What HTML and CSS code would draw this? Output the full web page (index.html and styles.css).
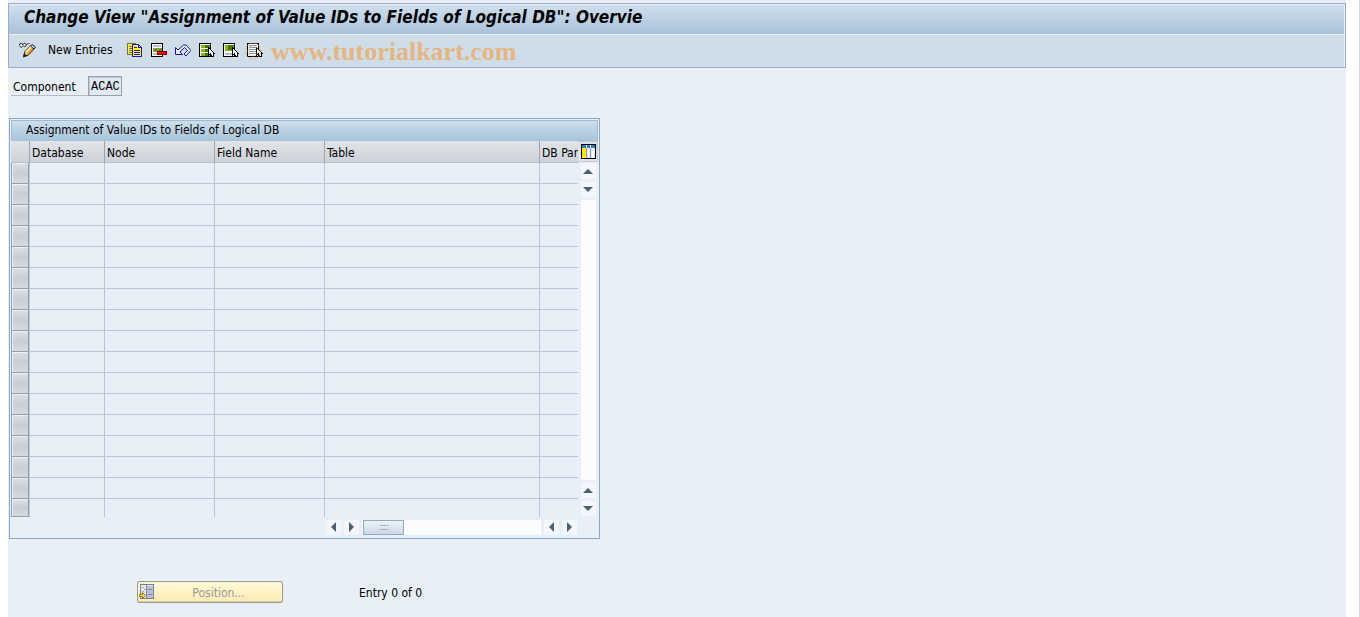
FILE: index.html
```html
<!DOCTYPE html>
<html lang="en">
  <head>
    <meta charset="utf-8" />
    <meta name="viewport" content="width=device-width, initial-scale=1" />
    <title>Change View: Overview</title>
    <link rel="stylesheet" href="styles.css">
    <script src="rows.js" defer></script>
  </head>
  <body>
    <main class="screen">
      <header class="head">
        <h1>Change View "Assignment of Value IDs to Fields of Logical DB": Overvie</h1>
        <div class="toolbar">
          <button type="button" class="tool" aria-label="Display / Change">
            <svg width="17" height="16" viewBox="0 0 17 16">
              <path d="M0.500 3.500v-1.500l1.500-1 1.500 1v1l2-2 1.500 1v1.500l2.500-2.500 1 1M0.500 4l2 1.500 1-1.500M4 3.500l1.500 1.500 1.500-1" fill="none" stroke="#333" />
              <path d="M1.500 3.500h1.500M5 3h1.500" stroke="#fff" />
              <path d="M4.500 14.500l1.500-5 6.500-6.500 3.500 3-6.500 7z" fill="#f9c24d" stroke="#222" />
              <path d="M7 10l5.500-5.500" stroke="#fff6c8" stroke-width="1.500" />
              <path d="M9 12l6-6.500" stroke="#e0812e" stroke-width="1.500" />
              <path d="M11.500 4l1.500-1.500 3.500 2.500-1.500 2z" fill="#d5dcee" stroke="#222" />
              <path d="M4 15.500l1-4 3.500 2.500z" fill="#222" />
            </svg>
          </button>
          <button type="button" class="tool text">New Entries</button>
          <button type="button" class="tool" aria-label="Copy As">
            <svg width="16" height="16" viewBox="0 0 16 16" shape-rendering="crispEdges">
              <path d="M0.500 1.500h8v11h-8z" fill="#f7ee5a" stroke="#77713a" />
              <path d="M2 4h3M2 6h3M2 8h3M2 10h3" stroke="#77713a" />
              <path d="M5.500 2.500h6l3 3v9h-9z" fill="#ffff21" stroke="#1414c8" />
              <path d="M11.500 2.500v3h3M7 5.500h3M7 8.500h6M7 10.500h6M7 12.500h6" fill="none" stroke="#1414c8" />
              <path d="M7 7.500h6M7 9.500h6M7 11.500h6M7 13.500h6" stroke="#ffff21" />
            </svg>
          </button>
          <button type="button" class="tool" aria-label="Delete">
            <svg width="16" height="16" viewBox="0 0 16 16" shape-rendering="crispEdges">
              <path d="M0.500 1.500h11v13h-11z" fill="#fff" stroke="#000" />
              <path d="M2 3h8v2H2zM2 11h5v2H2z" fill="#b9bfd9" />
              <path d="M2 6h9v4H2z" fill="#83a526" />
              <path d="M4 7h2v2H4zM8 7h2v2H8z" fill="#567c00" />
              <path d="M6.500 9.500h9v3h-9z" fill="#f00" stroke="#7a0000" />
            </svg>
          </button>
          <button type="button" class="tool" aria-label="Undo">
            <svg width="16" height="16" viewBox="0 0 16 16">
              <path d="M0.500 5.500v7h7l-2.500-2.500 4.500-4.500 3 3-3.500 3.500 2 2 5-5.500-5-5.500h-2.500l-5.500 5z" fill="#e6edf6" stroke="#15159c" />
            </svg>
          </button>
          <button type="button" class="tool" aria-label="Select All">
            <svg width="16" height="16" viewBox="0 0 16 16" shape-rendering="crispEdges">
              <path d="M0.500 1.500h11v13h-11z" fill="#fff" stroke="#000" />
              <path d="M2 3h9v3H2zM2 7h9v3H2zM2 11h9v3H2z" fill="#83b51c" />
              <path d="M6 3h5v3H6zM6 7h5v3H6zM6 11h4v3H6z" fill="#4b7600" />
              <path d="M9.500 5.500v8l2-2 1 3h1.500v-3h1.500z" fill="#fff" stroke="#000" />
            </svg>
          </button>
          <button type="button" class="tool" aria-label="Select Block">
            <svg width="16" height="16" viewBox="0 0 16 16" shape-rendering="crispEdges">
              <path d="M0.500 1.500h11v13h-11z" fill="#fff" stroke="#000" />
              <path d="M2 3h9v6H2z" fill="#83b51c" />
              <path d="M5 3h6v5H5z" fill="#4b7600" />
              <path d="M2 11h7v2H2z" fill="#a9b8cf" />
              <path d="M9.500 5.500v8l2-2 1 3h1.500v-3h1.500z" fill="#fff" stroke="#000" />
            </svg>
          </button>
          <button type="button" class="tool" aria-label="Deselect All">
            <svg width="16" height="16" viewBox="0 0 16 16" overflow="visible" shape-rendering="crispEdges">
              <path d="M0.500 1.500h11v13h-11z" fill="#fff" stroke="#000" />
              <path d="M2 3.500h8M2 5.500h8M2 7.500h8M2 9.500h7M2 11.500h7" stroke="#7d92ad" />
              <path d="M9.500 5.500v8l2-2 1 3h1.500v-3h1.500z" fill="#fff" stroke="#000" />
              <g fill="none" stroke="#e8a870" stroke-opacity="0.500" shape-rendering="auto">
                <circle cx="6" cy="9" r="8" />
                <circle cx="6" cy="9" r="5" />
              </g>
            </svg>
          </button>
          <span class="watermark">www.tutorialkart.com</span>
        </div>
      </header>

      <div class="field">
        <label for="component">Component</label>
        <input type="text" id="component" value="ACAC" readonly />
      </div>

      <section class="panel">
        <h2>Assignment of Value IDs to Fields of Logical DB</h2>
        <div class="grid">
          <table>
            <colgroup>
              <col class="c-sel" /><col class="c-db" /><col class="c-node" />
              <col class="c-node" /><col class="c-table" /><col class="c-par" />
            </colgroup>
            <thead>
              <tr>
                <th></th>
                <th>Database</th>
                <th>Node</th>
                <th>Field Name</th>
                <th>Table</th>
                <th>DB Par</th>
              </tr>
            </thead>
            <tbody id="rows"></tbody>
          </table>
          <div class="side">
            <button type="button" class="config" aria-label="Configuration">
              <svg width="15" height="15" viewBox="0 0 15 15" shape-rendering="crispEdges">
                <path d="M0.500 0.500h14v14H0.500z" fill="#fff" stroke="#000" />
                <path d="M1 1h13v3H1z" fill="#2f7fc4" />
                <path d="M1 4h4v10H1z" fill="#ffe600" />
                <path d="M6 4h3v10H6zM10 4h4v10h-4z" fill="#e3e6ee" />
                <path d="M7 4h1v10H7zM11 4h2v10h-2z" fill="#fff" />
                <path d="M5.500 1v13M9.500 1v13" stroke="#8fa0b8" />
                <path d="M5.500 1v3M9.500 1v3" stroke="#fff" />
              </svg>
            </button>
            <div class="vscroll">
              <button type="button" class="arrow up" aria-label="Line up"></button>
              <button type="button" class="arrow down" aria-label="Line down"></button>
              <div class="track"></div>
              <button type="button" class="arrow up" aria-label="Page up"></button>
              <button type="button" class="arrow down" aria-label="Page down"></button>
            </div>
          </div>
          <div class="hscroll">
            <button type="button" class="arrow left" aria-label="Column left"></button>
            <button type="button" class="arrow right" aria-label="Column right"></button>
            <div class="track">
              <div class="thumb">
                <svg width="8" height="5" viewBox="0 0 8 5" shape-rendering="crispEdges">
                  <path d="M0 0h2v1H0zM3 0h2v1H3zM6 0h2v1H6zM0 4h2v1H0zM3 4h2v1H3zM6 4h2v1H6z" fill="#93a5b8" />
                  <path d="M0 1h1v1H0zM3 1h1v1H3zM6 1h1v1H6z" fill="#fff" />
                </svg>
              </div>
            </div>
            <button type="button" class="arrow left" aria-label="Page left"></button>
            <button type="button" class="arrow right" aria-label="Page right"></button>
          </div>
        </div>
      </section>

      <footer class="foot">
        <button type="button" class="position" disabled>
          <svg width="16" height="16" viewBox="0 0 16 16" shape-rendering="crispEdges">
            <path d="M1.500 0.500h13v14h-13z" fill="#e4e6ee" stroke="#77808f" />
            <path d="M8 2h6v12H8z" fill="#bdbfda" />
            <path d="M7.500 1v13M9 5.500h4M9 10.500h4" stroke="#808897" />
            <path d="M3 3.500h2M5 5.500h2M3 7.500h2" stroke="#a0a7b4" />
            <path d="M0.500 10.500h3v-2l3 3-3 3v-2h-3z" fill="#ffe14a" stroke="#8a7a2c" shape-rendering="auto" />
          </svg>
          <span>Position...</span>
        </button>
        <span class="entry">Entry 0 of 0</span>
      </footer>
    </main>
  </body>
</html>
```
FILE: rows.js
```js
// empty entry rows, each with its selector button in front
const ROW_COUNT = 17
const body = document.getElementById('rows')

for (let i = 1; i <= ROW_COUNT; i++) {
    const row = document.createElement('tr')
    row.innerHTML = `<td><button type="button" class="pick" aria-label="Select row ${i}"></button></td>` + '<td></td>'.repeat(5)
    body.appendChild(row)
}
```
FILE: styles.css
```css
* {
    box-sizing: border-box;
}

body {
    margin: 0;
    background: #fff;
    border-right: 1px solid #d5dbe8;
    min-height: 100vh;
    font-family: "DejaVu Sans Condensed", "DejaVu Sans", sans-serif;
    font-size: 12px;
    color: #000;
}

button {
    font: inherit;
    padding: 0;
    border: none;
    background: none;
}

svg {
    display: block;
}

.screen {
    margin: 0 13px 0 8px;
    padding-top: 3px;
    min-height: 100vh;
    background: #e8eff7;
}

.head {
    border: 1px solid #9cadc2;
}

.head h1 {
    margin: 0;
    height: 31px;
    padding-left: 15px;
    border: 1px solid #e8eff7;
    border-left: none;
    background: linear-gradient(#d0e0ec, #aac1db);
    font-size: 17px;
    line-height: 25px;
    font-style: italic;
    white-space: nowrap;
    overflow: hidden;
}

.toolbar {
    display: flex;
    align-items: center;
    height: 32px;
    padding: 0 10px 2px;
    border-right: 1px solid #e8eff7;
    background: #cfdde8;
    gap: 8px;
}

.tool.text {
    margin: 0 4px;
    width: 67px;
    text-align: left;
    white-space: nowrap;
}

.watermark {
    font-family: "Liberation Serif", serif;
    font-size: 26px;
    line-height: 30px;
    padding-top: 3px;
    font-weight: bold;
    color: #e5b583;
}

.field {
    display: flex;
    margin: 8px 3px 0;
}

.field label {
    width: 77px;
    height: 20px;
    padding-left: 2px;
    border-bottom: 1px solid #b4bcc6;
    line-height: 22px;
}

.field input {
    width: 34px;
    height: 20px;
    padding: 2px 0 0 2px;
    border: 1px solid #9a9fa6;
    box-shadow: inset 1px 1px #c3ccd6;
    background: #dfe9f3;
    font-family: "Liberation Mono", monospace;
    font-size: 12px;
}

.panel {
    width: 591px;
    margin: 22px 0 0 1px;
    padding: 1px 1px 3px;
    border: 1px solid #87a9c9;
}

.panel h2 {
    margin: 0;
    height: 21px;
    padding-left: 14px;
    border: 1px solid #a6b8cb;
    border-bottom-color: #a9c3da;
    background: linear-gradient(#cddfeb, #a9c4dc);
    font-size: 12px;
    font-weight: normal;
    line-height: 18px;
}

.grid {
    display: grid;
    grid-template-columns: 567px 20px;
}

table {
    width: 567px;
    table-layout: fixed;
    border-collapse: separate;
    border-spacing: 0;
}

.c-sel { width: 19px; }
.c-db { width: 75px; }
.c-node { width: 110px; }
.c-table { width: 215px; }
.c-par { width: 38px; }

th {
    height: 22px;
    padding: 2px 0 0 2px;
    border-right: 1px solid #9aa6b8;
    border-bottom: 1px solid #b9c0cc;
    background: linear-gradient(#e1e3e6, #cdd2d9);
    font-weight: normal;
    text-align: left;
    white-space: nowrap;
}

td {
    height: 21px;
    padding: 0;
    border-right: 1px solid #bcc5d6;
    border-bottom: 1px solid #bcc5d6;
}

th:last-child,
td:last-child {
    border-right: none;
}

tr:last-child td {
    height: 18px;
    border-bottom: none;
}

td:first-child {
    border-bottom: none;
}

.pick {
    display: block;
    width: 18px;
    height: 21px;
    border: 1px solid #949eb0;
    border-top: none;
    background: linear-gradient(#dde0e5, #c9cdd6 50%, #d5d9df);
    box-shadow: inset 1px 1px #eceff3;
}

tr:last-child .pick {
    height: 18px;
}

.side {
    display: flex;
    flex-direction: column;
}

.config {
    display: flex;
    align-items: center;
    justify-content: center;
    height: 21px;
    padding-left: 1px;
    border: 1px solid #c3c8d0;
    border-left: none;
    background: #dfe2e6;
}

.vscroll {
    display: flex;
    flex-direction: column;
    flex: 1;
    width: 15px;
    margin: 2px 0 1px 3px;
    gap: 3px;
}

.hscroll {
    display: flex;
    height: 15px;
    margin: 3px 1px 0 315px;
    gap: 3px;
}

.track {
    flex: 1;
    background: #fbfcfd;
}

.arrow {
    display: flex;
    align-items: center;
    justify-content: center;
    width: 15px;
    height: 15px;
    padding: 0 1px 1px 0;
    background: #f3f7fb;
}

.arrow::before {
    content: "";
    border: 5px solid transparent;
}

.up::before {
    border-top: none;
    border-bottom-color: #4c6072;
}

.down::before {
    border-bottom: none;
    border-top-color: #4c6072;
}

.left::before {
    border-left: none;
    border-right-color: #4c6072;
}

.right::before {
    border-right: none;
    border-left-color: #4c6072;
}

.thumb {
    display: flex;
    align-items: center;
    justify-content: center;
    width: 41px;
    height: 15px;
    margin-left: 1px;
    border: 1px solid #9aa9b9;
    background: linear-gradient(#eaf3fa, #cbd9e6);
}

.foot {
    display: flex;
    align-items: center;
    gap: 76px;
    margin: 42px 0 0 129px;
}

.position {
    display: flex;
    align-items: center;
    width: 146px;
    height: 22px;
    padding-left: 1px;
    border: 1px solid #9b9b93;
    border-radius: 2px;
    background: linear-gradient(#fffadb, #fff1c0 60%, #f9ebb5);
    box-shadow: inset 0 -1px #dccf9f;
    color: #999;
}

.position span {
    flex: 1;
    padding-top: 2px;
    text-align: center;
}

.entry {
    padding-top: 2px;
}
```
